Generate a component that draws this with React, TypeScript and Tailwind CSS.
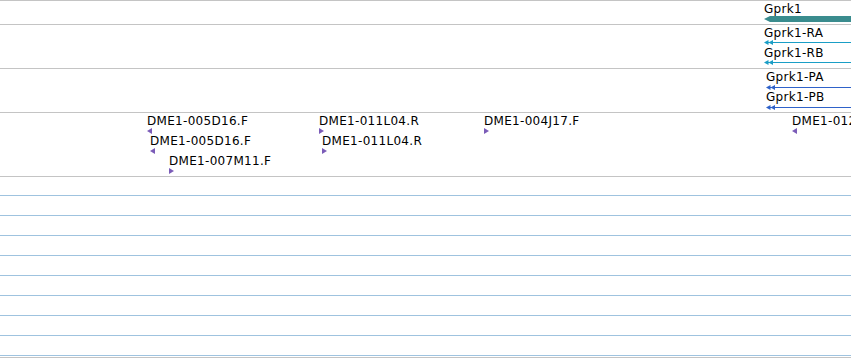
type Clone = { text: string; x: number; y: number; dir: 'l' | 'r' };

// clone end features, placed at their genomic position
const clones: Clone[] = [
  { text: 'DME1-005D16.F', x: 147, y: 1, dir: 'l' },
  { text: 'DME1-005D16.F', x: 150, y: 21, dir: 'l' },
  { text: 'DME1-007M11.F', x: 169, y: 41, dir: 'r' },
  { text: 'DME1-011L04.R', x: 319, y: 1, dir: 'r' },
  { text: 'DME1-011L04.R', x: 322, y: 21, dir: 'r' },
  { text: 'DME1-004J17.F', x: 484, y: 1, dir: 'r' },
  { text: 'DME1-012L22.R', x: 792, y: 1, dir: 'l' },
];

const labelCls = 'whitespace-nowrap text-[12px] leading-[14px] tracking-[0.3px] text-black';

const CloneFeature = ({ text, x, y, dir }: Clone) => (
  <div className="absolute flex flex-col" style={{ left: x, top: y }}>
    <span className={labelCls}>{text}</span>
    <svg width="5" height="6" viewBox="0 0 5 6">
      {dir === 'l' ? (
        <polygon points="0,3 5,0 5,6" fill="#7b5cb8" />
      ) : (
        <polygon points="0,0 5,3 0,6" fill="#7b5cb8" />
      )}
    </svg>
  </div>
);

// transcript / protein: label over a line with double arrowheads pointing left
const Strand = ({ text, color, lineY }: { text: string; color: string; lineY: number }) => (
  <div className="flex flex-col">
    <span className={labelCls}>{text}</span>
    <svg className="w-full" height="6">
      <polygon points={`0,${lineY + 0.5} 4.5,${lineY - 2} 4.5,${lineY + 3}`} fill={color} />
      <polygon points={`4.5,${lineY + 0.5} 9,${lineY - 2} 9,${lineY + 3}`} fill={color} />
      <rect x="4" y={lineY} width="200" height="1" fill={color} />
    </svg>
  </div>
);

export default function App() {
  return (
    <div
      className="w-[851px] h-[360px] bg-white overflow-hidden"
      style={{ fontFamily: '"DejaVu Sans", sans-serif' }}
    >
      <div className="border-t border-[#c4c4c4]">
        {/* gene */}
        <div className="h-[24px] border-b border-[#c4c4c4] pl-[764px] pt-[1px] flex flex-col">
          <span className={labelCls}>Gprk1</span>
          <svg className="w-full" height="6">
            <polygon points="0,3 6,0 200,0 200,6 6,6" fill="#3a8c8e" />
          </svg>
        </div>
        {/* transcripts */}
        <div className="h-[44px] border-b border-[#c4c4c4] pl-[764px] pt-[1px] flex flex-col">
          <Strand text="Gprk1-RA" color="#1a9ec6" lineY={2} />
          <Strand text="Gprk1-RB" color="#1a9ec6" lineY={2} />
        </div>
        {/* proteins */}
        <div className="h-[44px] border-b border-[#c4c4c4] pl-[766px] pt-[1px] flex flex-col">
          <Strand text="Gprk1-PA" color="#2f62c9" lineY={3} />
          <Strand text="Gprk1-PB" color="#2f62c9" lineY={3} />
        </div>
        {/* clone ends */}
        <div className="relative h-[64px] border-b border-[#c4c4c4]">
          {clones.map((c, i) => (
            <CloneFeature key={i} {...c} />
          ))}
        </div>
        {/* empty quantitative track */}
        <div className="h-[181px] border-b border-[#c4c4c4] flex flex-col">
          <div className="h-[19px] border-b border-[#9fc3df]" />
          {[0, 1, 2, 3, 4, 5, 6, 7].map((i) => (
            <div key={i} className="h-[20px] border-b border-[#9fc3df]" />
          ))}
        </div>
      </div>
    </div>
  );
}
